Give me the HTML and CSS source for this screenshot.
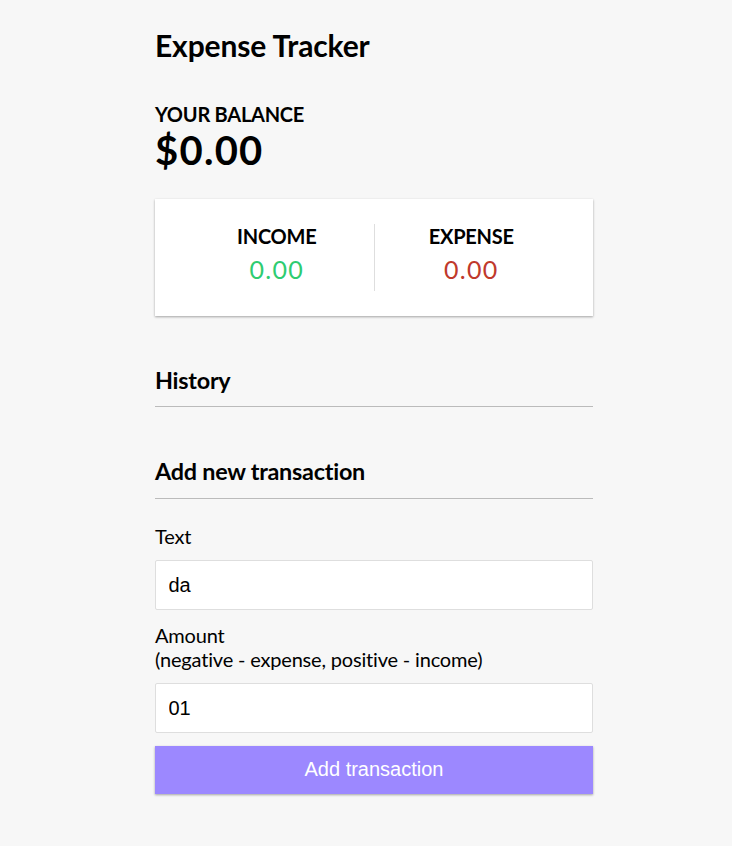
FILE: index.html
```html
<!DOCTYPE html>
<html lang="en">
<head>
<meta charset="UTF-8">
<title>Expense Tracker</title>
<link rel="stylesheet" href="styles.css">
</head>
<body>
  <div class="container">
    <h2 class="title">Expense Tracker</h2>
    <h4>Your Balance</h4>
    <h1 class="balance">$0.00</h1>
    <div class="inc-exp-container">
      <div class="inc-exp">
        <h4>Income</h4>
        <p class="money plus">0.00</p>
      </div>
      <div class="inc-exp">
        <h4>Expense</h4>
        <p class="money minus">0.00</p>
      </div>
    </div>
    <h3>History</h3>
    <ul class="list"></ul>
    <h3>Add new transaction</h3>
    <form class="form">
      <div class="form-control">
        <label for="text">Text</label>
        <input type="text" id="text" value="da">
      </div>
      <div class="form-control">
        <label for="amount">Amount <br>(negative - expense, positive - income)</label>
        <input type="text" inputmode="numeric" id="amount" value="01">
      </div>
      <button type="button" class="btn">Add transaction</button>
    </form>
  </div>
</body>
</html>
```
FILE: styles.css
```css
* {
  box-sizing: border-box;
}

body {
  margin: 0;
  background-color: #f7f7f7;
  font-family: Lato, "Liberation Sans", sans-serif;
  color: #000;
}

.container {
  width: 438px;
  margin: 0 0 0 155px;
  padding-top: 27px;
}

.title {
  font-size: 30px;
  font-weight: 700;
  letter-spacing: -0.13px;
  margin: 0 0 39px;
}

h4 {
  margin: 0;
  font-size: 20px;
  font-weight: 700;
  letter-spacing: -0.25px;
  text-transform: uppercase;
}

.balance {
  margin: 0;
  font-size: 40px;
  font-weight: 700;
  letter-spacing: 1.25px;
}

.inc-exp-container {
  background-color: #fff;
  box-shadow: 0 1px 3px rgba(0, 0, 0, 0.12), 0 1px 2px rgba(0, 0, 0, 0.24);
  padding: 25px;
  display: flex;
  justify-content: space-between;
  margin: 25px 0;
}

.inc-exp {
  flex: 1;
  text-align: center;
}

.inc-exp:first-of-type {
  border-right: 1px solid #dedede;
}

.money {
  font-size: 25px;
  letter-spacing: 1.25px;
  margin: 6.25px 0;
}

.money.plus {
  color: #2ecc71;
}

.money.minus {
  color: #c0392b;
}

h3 {
  font-size: 23.4px;
  font-weight: 700;
  letter-spacing: -0.25px;
  border-bottom: 1px solid #bbb;
  padding-bottom: 12.5px;
  margin: 50px 0 12.5px;
}

.list {
  list-style: none;
  padding: 0;
  margin: 0;
}

.form-control {
  font-size: 20px;
}

.form-control label {
  display: inline-block;
  margin: 12.5px 0;
  font-size: 20px;
  letter-spacing: -0.18px;
}

.form-control input {
  display: block;
  width: 100%;
  height: 50px;
  border: 1px solid #dedede;
  border-radius: 2px;
  font-family: "Liberation Sans", Arial, sans-serif;
  font-size: 20px;
  line-height: 23px;
  padding: 12.5px;
  color: #000;
  background: #fff;
  outline: none;
}

.btn {
  display: block;
  width: 100%;
  height: 48px;
  cursor: pointer;
  background-color: #9c88ff;
  box-shadow: 0 1px 3px rgba(0, 0, 0, 0.12), 0 1px 2px rgba(0, 0, 0, 0.24);
  color: #fff;
  border: 0;
  font-family: "Liberation Sans", Arial, sans-serif;
  font-size: 20px;
  line-height: 23px;
  margin: 12.5px 0 37.5px;
  padding: 12.5px;
}
```
